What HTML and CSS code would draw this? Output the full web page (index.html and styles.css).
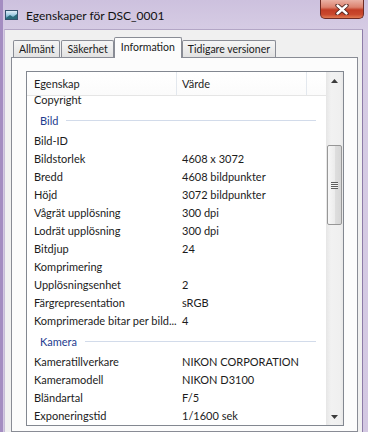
FILE: index.html
```html
<!DOCTYPE html>
<html lang="sv">
<head>
  <meta charset="UTF-8">
  <meta name="viewport" content="width=device-width, initial-scale=1.0">
  <title>Egenskaper för DSC_0001</title>
  <link rel="stylesheet" href="styles.css">
</head>
<body>
  <div class="window">
    <!-- Titelrad -->
    <div class="titlebar">
      <svg class="app-icon" width="13" height="10" viewBox="0 0 13 10">
        <defs>
          <linearGradient id="sky" x1="0" y1="0" x2="0" y2="1">
            <stop offset="0" stop-color="#e6f2fa"/>
            <stop offset="0.5" stop-color="#9fcbe2"/>
            <stop offset="1" stop-color="#2f7f99"/>
          </linearGradient>
        </defs>
        <rect x="0.5" y="0.5" width="12" height="9" fill="url(#sky)" stroke="#34536f"/>
        <path d="M1 8 L5 5 L8 7 L12 4 L12 9 L1 9 Z" fill="#2a6b7c"/>
      </svg>
      <span class="title">Egenskaper för DSC_0001</span>
      <div class="close">
        <svg width="14" height="11" viewBox="0 0 14 11">
          <path d="M2.5 1.5 L11.5 9.5 M11.5 1.5 L2.5 9.5" stroke="#4a1f1a" stroke-width="4.2" stroke-linecap="round"/>
          <path d="M2.5 1.5 L11.5 9.5 M11.5 1.5 L2.5 9.5" stroke="#fff" stroke-width="2.4" stroke-linecap="round"/>
        </svg>
      </div>
    </div>

    <div class="client">
      <!-- Flikar -->
      <div class="tabs">
        <div class="tab">Allmänt</div>
        <div class="tab">Säkerhet</div>
        <div class="tab selected">Information</div>
        <div class="tab">Tidigare versioner</div>
      </div>

      <div class="panel">
        <div class="listview">
          <div class="lv-main">
            <div class="lv-header">
              <div class="col-name">Egenskap</div>
              <div class="col-value">Värde</div>
              <div class="col-rest"></div>
            </div>
            <div class="lv-body">
              <div class="lv-rows">
                <div class="row"><span class="name">Copyright</span><span class="value"></span></div>

                <div class="group">Bild</div>
                <div class="row"><span class="name">Bild-ID</span><span class="value"></span></div>
                <div class="row"><span class="name">Bildstorlek</span><span class="value">4608 x 3072</span></div>
                <div class="row"><span class="name">Bredd</span><span class="value">4608 bildpunkter</span></div>
                <div class="row"><span class="name">Höjd</span><span class="value">3072 bildpunkter</span></div>
                <div class="row"><span class="name">Vågrät upplösning</span><span class="value">300 dpi</span></div>
                <div class="row"><span class="name">Lodrät upplösning</span><span class="value">300 dpi</span></div>
                <div class="row"><span class="name">Bitdjup</span><span class="value">24</span></div>
                <div class="row"><span class="name">Komprimering</span><span class="value"></span></div>
                <div class="row"><span class="name">Upplösningsenhet</span><span class="value">2</span></div>
                <div class="row"><span class="name">Färgrepresentation</span><span class="value">sRGB</span></div>
                <div class="row"><span class="name">Komprimerade bitar per bild...</span><span class="value">4</span></div>

                <div class="group">Kamera</div>
                <div class="row"><span class="name">Kameratillverkare</span><span class="value">NIKON CORPORATION</span></div>
                <div class="row"><span class="name">Kameramodell</span><span class="value">NIKON D3100</span></div>
                <div class="row"><span class="name">Bländartal</span><span class="value">F/5</span></div>
                <div class="row"><span class="name">Exponeringstid</span><span class="value">1/1600 sek</span></div>
              </div>
            </div>
          </div>

          <!-- Rullningslist -->
          <div class="scrollbar">
            <div class="sb-arrow">
              <svg width="7" height="4" viewBox="0 0 7 4"><path d="M0 4 L3.5 0 L7 4 Z" fill="#3c3c3c"/></svg>
            </div>
            <div class="sb-track">
              <div class="sb-thumb"><span class="grip"></span></div>
            </div>
            <div class="sb-arrow">
              <svg width="7" height="4" viewBox="0 0 7 4"><path d="M0 0 L7 0 L3.5 4 Z" fill="#3c3c3c"/></svg>
            </div>
          </div>
        </div>
      </div>
    </div>
  </div>
</body>
</html>
```

FILE: styles.css
```css
body {
  margin: 0;
  font-family: Lato, "Liberation Sans", sans-serif;
  font-size: 11px;
  color: #1c1c1c;
  background-color: #d3c8e2;
  overflow: hidden;
}
.window {
  width: 365px;
  height: 432px;
  border-left: 3px solid #a48dc1;
  background: linear-gradient(to bottom, #cdc1de, #d6cce4 30px, #d3c8e2);
  display: flex;
  flex-direction: column;
  overflow: hidden;
}

/* Titelrad */
.titlebar {
  height: 29px;
  flex: 0 0 29px;
  display: flex;
  align-items: flex-start;
}
.app-icon {
  margin: 10px 0 0 2px;
}
.title {
  margin: 8px 0 0 8px;
  font-size: 12px;
  line-height: 16px;
  color: #111;
}
.close {
  margin-left: auto;
  margin-right: 4px;
  width: 44px;
  height: 19px;
  box-sizing: border-box;
  border: 1px solid #6e2b24;
  border-top: none;
  border-radius: 0 0 5px 5px;
  background: linear-gradient(to bottom, #eab1a4 0%, #dc826e 40%, #c23d25 55%, #c9482d 80%, #e07a52 100%);
  display: flex;
  align-items: center;
  justify-content: center;
}

/* Klientyta */
.client {
  flex: 1;
  margin: 0 5px 0 1px;
  background-color: #f0f0f0;
  border-top: 1px solid #b3a6c6;
  border-left: 1px solid #c6bbd6;
  border-right: 1px solid #8d7ca8;
  display: flex;
  flex-direction: column;
}
.tabs {
  display: flex;
  align-items: flex-end;
  padding: 7px 0 0 8px;
}
.tab {
  height: 16px;
  line-height: 16px;
  padding: 0 5px;
  margin-right: 1px;
  font-size: 10.5px;
  border: 1px solid #898c95;
  border-bottom: none;
  border-radius: 2px 2px 0 0;
  background: linear-gradient(to bottom, #f5f5f5, #ececec 50%, #e2e2e2);
  color: #1a1a1a;
}
.tab.selected {
  height: 20px;
  line-height: 19px;
  padding: 0 6px;
  margin: 0 0 -1px -1px;
  background: #fcfcfc;
  position: relative;
  z-index: 1;
}
.panel {
  flex: 1;
  margin: 0 4px 0 6px;
  border: 1px solid #898c95;
  background-color: #fcfcfc;
}

/* Listvy */
.listview {
  display: flex;
  height: 355px;
  box-sizing: border-box;
  margin: 13px 13px 0 14px;
  border: 1px solid #828790;
  background-color: #fff;
}
.lv-main {
  flex: 1;
  display: flex;
  flex-direction: column;
  overflow: hidden;
}
.lv-header {
  display: flex;
  height: 23px;
  flex: 0 0 23px;
  border-bottom: 1px solid #e5e5e5;
  background: linear-gradient(to bottom, #fff, #fbfbfb);
  line-height: 23px;
  color: #1e1e1e;
}
.col-name {
  width: 150px;
  box-sizing: border-box;
  padding-left: 7px;
  border-right: 1px solid #e3e8ee;
}
.col-value {
  width: 130px;
  box-sizing: border-box;
  padding-left: 5px;
  border-right: 1px solid #e3e8ee;
}
.col-rest {
  flex: 1;
}
.lv-body {
  flex: 1;
  overflow: hidden;
}
.lv-rows {
  margin-top: -5px;
}
.row {
  display: flex;
  height: 18px;
  line-height: 18px;
  white-space: nowrap;
}
.name {
  width: 150px;
  box-sizing: border-box;
  padding-left: 7px;
  overflow: hidden;
}
.value {
  padding-left: 5px;
}
.group {
  display: flex;
  align-items: center;
  height: 23px;
  padding: 0 10px 0 13px;
  color: #1e3c8f;
}
.group::after {
  content: "";
  flex: 1;
  height: 1px;
  margin-left: 8px;
  background-color: #d2dbea;
}

/* Rullningslist */
.scrollbar {
  width: 17px;
  flex: 0 0 17px;
  display: flex;
  flex-direction: column;
  background: linear-gradient(to right, #e6e6e6, #f2f2f2 30%, #f0f0f0 80%, #e8e8e8);
}
.sb-arrow {
  height: 17px;
  flex: 0 0 17px;
  display: flex;
  align-items: center;
  justify-content: center;
}
.sb-track {
  flex: 1;
}
.sb-thumb {
  margin: 56px 1px 0 1px;
  height: 80px;
  box-sizing: border-box;
  border: 1px solid #979797;
  border-radius: 2px;
  background: linear-gradient(to right, #f7f7f7, #ececec 50%, #dedede 55%, #d6d6d6);
  display: flex;
  align-items: center;
  justify-content: center;
}
.grip {
  width: 7px;
  height: 7px;
  background: repeating-linear-gradient(to bottom, #5e5e5e 0, #5e5e5e 1px, #f4f4f4 1px, #f4f4f4 2px);
}
```
